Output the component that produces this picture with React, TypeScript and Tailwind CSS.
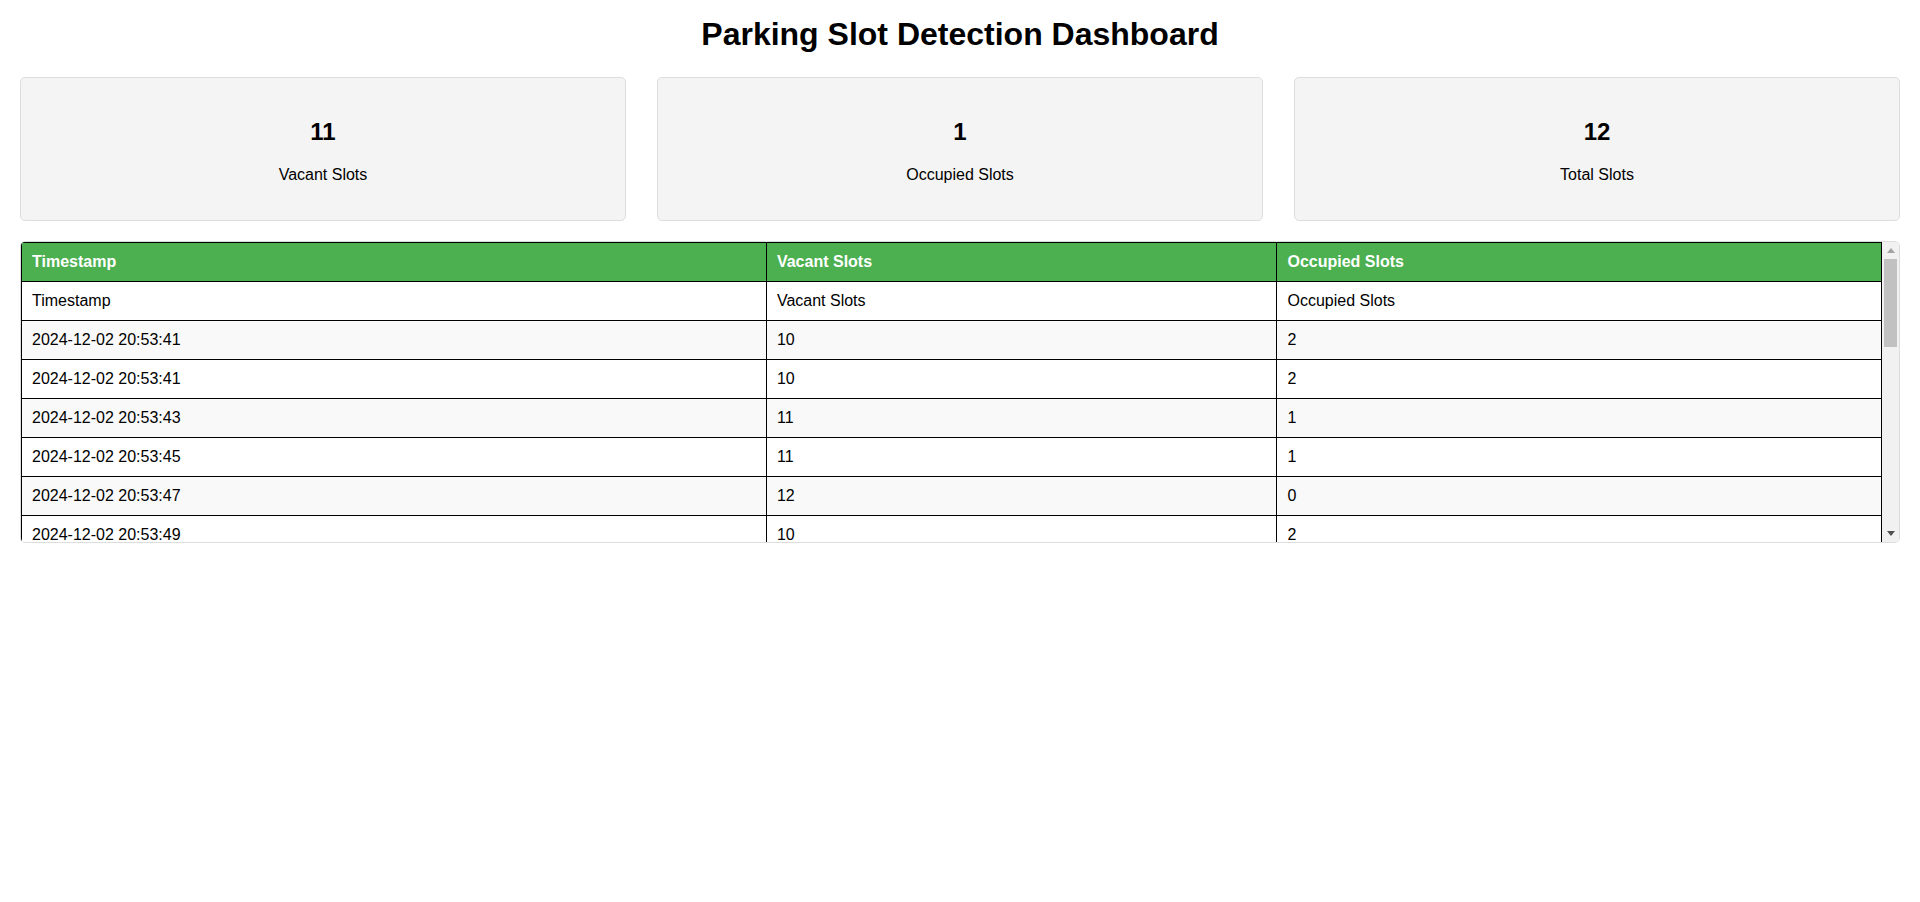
import React from "react";

type Row = { timestamp: string; vacant: string; occupied: string };

const stats = [
  { value: 11, label: "Vacant Slots" },
  { value: 1, label: "Occupied Slots" },
  { value: 12, label: "Total Slots" },
];

const rows: Row[] = [
  { timestamp: "Timestamp", vacant: "Vacant Slots", occupied: "Occupied Slots" },
  { timestamp: "2024-12-02 20:53:41", vacant: "10", occupied: "2" },
  { timestamp: "2024-12-02 20:53:41", vacant: "10", occupied: "2" },
  { timestamp: "2024-12-02 20:53:43", vacant: "11", occupied: "1" },
  { timestamp: "2024-12-02 20:53:45", vacant: "11", occupied: "1" },
  { timestamp: "2024-12-02 20:53:47", vacant: "12", occupied: "0" },
  { timestamp: "2024-12-02 20:53:49", vacant: "10", occupied: "2" },
  { timestamp: "2024-12-02 20:53:51", vacant: "11", occupied: "1" },
  { timestamp: "2024-12-02 20:53:53", vacant: "11", occupied: "1" },
  { timestamp: "2024-12-02 20:53:55", vacant: "10", occupied: "2" },
  { timestamp: "2024-12-02 20:53:57", vacant: "11", occupied: "1" },
  { timestamp: "2024-12-02 20:53:59", vacant: "11", occupied: "1" },
  { timestamp: "2024-12-02 20:54:01", vacant: "12", occupied: "0" },
  { timestamp: "2024-12-02 20:54:03", vacant: "11", occupied: "1" },
  { timestamp: "2024-12-02 20:54:05", vacant: "10", occupied: "2" },
  { timestamp: "2024-12-02 20:54:07", vacant: "11", occupied: "1" },
  { timestamp: "2024-12-02 20:54:09", vacant: "11", occupied: "1" },
  { timestamp: "2024-12-02 20:54:11", vacant: "11", occupied: "1" },
  { timestamp: "2024-12-02 20:54:13", vacant: "10", occupied: "2" },
  { timestamp: "2024-12-02 20:54:15", vacant: "11", occupied: "1" },
  { timestamp: "2024-12-02 20:54:17", vacant: "11", occupied: "1" },
  { timestamp: "2024-12-02 20:54:19", vacant: "11", occupied: "1" },
];

export default function App() {
  return (
    <div className="min-h-screen bg-white px-[20px] pt-[16px] font-['Liberation_Sans',Arial,sans-serif] text-[16px] leading-[normal] text-black">
      <h1 className="mb-[24px] text-center text-[32px] font-bold leading-[37px]">
        Parking Slot Detection Dashboard
      </h1>

      <div className="mb-[20px] grid grid-cols-3 gap-[31px]">
        {stats.map((s) => (
          <StatCard key={s.label} value={s.value} label={s.label} />
        ))}
      </div>

      <div className="flex h-[302px] overflow-hidden rounded-[5px] border border-[#ddd]">
        <div className="min-w-0 flex-1 overflow-y-auto">
          <table className="w-full table-fixed border-collapse">
            <colgroup>
              <col className="w-[40.05%]" />
              <col className="w-[27.45%]" />
              <col />
            </colgroup>
            <thead>
              <tr>
                <Th>Timestamp</Th>
                <Th>Vacant Slots</Th>
                <Th>Occupied Slots</Th>
              </tr>
            </thead>
            <tbody>
              {rows.map((r, i) => (
                <tr key={i} className={i % 2 === 1 ? "bg-[#f9f9f9]" : "bg-white"}>
                  <Td>{r.timestamp}</Td>
                  <Td>{r.vacant}</Td>
                  <Td>{r.occupied}</Td>
                </tr>
              ))}
            </tbody>
          </table>
        </div>
        <ScrollTrack />
      </div>
    </div>
  );
}

function StatCard({ value, label }: { value: number; label: string }) {
  return (
    <div className="rounded-[5px] border border-[#ddd] bg-[#f4f4f4] px-[20px] py-[20px] text-center">
      <h2 className="my-[20px] text-[24px] font-bold leading-[28px]">{value}</h2>
      <p className="mb-[16px] leading-[18px]">{label}</p>
    </div>
  );
}

function Th({ children }: { children: React.ReactNode }) {
  return (
    <th className="sticky top-0 border border-black bg-[#4CAF50] p-[10px] text-left font-bold text-white">
      {children}
    </th>
  );
}

function Td({ children }: { children: React.ReactNode }) {
  return <td className="border border-black p-[10px] text-left">{children}</td>;
}

// classic scrollbar look, the browser one is hidden in the screenshot runner
function ScrollTrack() {
  return (
    <div className="flex w-[17px] shrink-0 flex-col bg-[#f1f1f1]">
      <div className="flex h-[17px] items-center justify-center">
        <svg width="8" height="5" viewBox="0 0 8 5">
          <polygon points="4,0 8,5 0,5" fill="#a3a3a3" />
        </svg>
      </div>
      <div className="flex-1 px-[2px]">
        <div className="h-[88px] bg-[#c1c1c1]" />
      </div>
      <div className="flex h-[17px] items-center justify-center">
        <svg width="8" height="5" viewBox="0 0 8 5">
          <polygon points="0,0 8,0 4,5" fill="#505050" />
        </svg>
      </div>
    </div>
  );
}
